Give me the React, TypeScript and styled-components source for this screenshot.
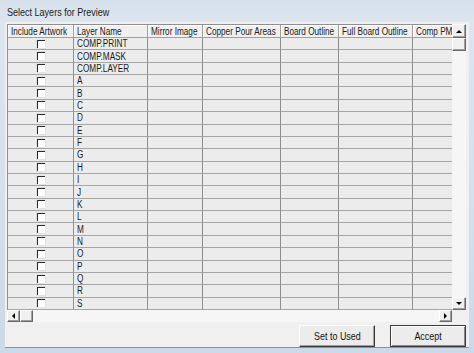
import React from "react";
import styled, { createGlobalStyle } from "styled-components";

const GlobalStyle = createGlobalStyle`
  *, *::before, *::after { box-sizing: border-box; }
  html, body { margin: 0; padding: 0; }
  body {
    background: #d3dfeb;
    font-family: "Liberation Sans", Arial, sans-serif;
  }
`;

// the dialog font is a narrow one; squeeze Liberation Sans to its width
const Label = styled.span<{ $scale?: number; $origin?: string }>`
  display: inline-block;
  white-space: nowrap;
  transform: scaleX(${(p) => p.$scale ?? 0.82});
  transform-origin: ${(p) => p.$origin ?? "left center"};
`;

const Frame = styled.div`
  width: 474px;
  height: 353px;
  display: flex;
  flex-direction: column;
  padding: 0 5px 5px 5px;
  background: linear-gradient(#d6e0ea, #dde6ef 22px, #cbdae9);
  overflow: hidden;
`;

const TitleBar = styled.div`
  height: 22px;
  display: flex;
  align-items: center;
  padding: 1px 0 0 2px;
  font-size: 11px;
  color: #1b1b1b;
`;

const Panel = styled.div`
  flex: 1;
  display: flex;
  flex-direction: column;
  gap: 3px;
  padding: 2px 3px 0 2px;
  background: #f0f0f0;
  border-bottom: 1px solid #8a9098;
`;

const GridBox = styled.div`
  display: grid;
  grid-template-columns: 1fr 14px;
  grid-template-rows: 286px 12px;
  height: 298px;
`;

const Viewport = styled.div`
  overflow: hidden;
  border-top: 1px solid #8f8f8f;
  border-left: 1px solid #8f8f8f;
  background: #ececec;
`;

const Table = styled.div`
  display: grid;
  grid-template-columns: 66px 74px 55px 78px 58px 74px 70px;
  grid-template-rows: 13px repeat(22, 1fr);
  height: 100%;
`;

const HeadCell = styled.div`
  display: flex;
  align-items: center;
  padding-left: 3px;
  font-size: 10px;
  color: #202020;
  white-space: nowrap;
  overflow: hidden;
  background: #f0f0f0;
  border-right: 1px solid #a0a0a0;
  border-bottom: 1px solid #a0a0a0;
  box-shadow: inset 1px 1px #ffffff;
`;

const Cell = styled.div<{ $center?: boolean }>`
  display: flex;
  align-items: center;
  justify-content: ${(p) => (p.$center ? "center" : "flex-start")};
  padding-left: ${(p) => (p.$center ? "0" : "3px")};
  font-size: 10px;
  color: #1a1a1a;
  white-space: nowrap;
  overflow: hidden;
  background: #ececec;
  border-right: 1px solid #8e8e8e;
  border-bottom: 1px solid #a6a6a6;
`;

const CheckBox = styled.div`
  width: 10px;
  height: 10px;
  margin-left: 1px;
  background: #ffffff;
  border: 1px solid;
  border-color: #7a7a7a #ffffff #ffffff #7a7a7a;
  box-shadow: inset 1px 1px #2a2a2a;
  outline: 1px solid #e2e2e2;
  outline-offset: -1px;
`;

const VScroll = styled.div`
  display: flex;
  flex-direction: column;
  background: #f6f6f6;
`;

const HScroll = styled.div`
  display: flex;
  background: #f6f6f6;
`;

const Corner = styled.div`
  background: #f0f0f0;
`;

const ArrowButton = styled.div<{ $w: number; $h: number }>`
  flex: none;
  width: ${(p) => p.$w}px;
  height: ${(p) => p.$h}px;
  display: flex;
  align-items: center;
  justify-content: center;
  background: #f0f0f0;
  border: 1px solid;
  border-color: #ffffff #6a6a6a #6a6a6a #ffffff;
  box-shadow: inset -1px -1px #a0a0a0;
`;

const Track = styled.div`
  flex: 1;
`;

const ButtonRow = styled.div`
  height: 22px;
  display: flex;
  justify-content: flex-end;
  gap: 15px;
`;

const Button = styled.div<{ $default?: boolean }>`
  width: 76px;
  height: 22px;
  display: flex;
  align-items: center;
  justify-content: center;
  font-size: 10.5px;
  color: #111;
  background: #ececec;
  border: 1px solid;
  border-color: ${(p) =>
    p.$default ? "#3a3a3a" : "#ffffff #3c3c3c #3c3c3c #ffffff"};
  box-shadow: ${(p) =>
    p.$default
      ? "inset 1px 1px #ffffff, inset -1px -1px #8a8a8a"
      : "inset -1px -1px #a0a0a0"};
`;

type Dir = "up" | "down" | "left" | "right";

const Arrow = ({ dir }: { dir: Dir }) => {
  const pts: Record<Dir, string> = {
    up: "0,4 6,4 3,1",
    down: "0,1 6,1 3,4",
    left: "4,0 4,6 1,3",
    right: "1,0 1,6 4,3",
  };
  const vertical = dir === "up" || dir === "down";
  return (
    <svg width={vertical ? 6 : 5} height={vertical ? 5 : 6}>
      <polygon points={pts[dir]} fill="#000" />
    </svg>
  );
};

const headers = [
  "Include Artwork",
  "Layer Name",
  "Mirror Image",
  "Copper Pour Areas",
  "Board Outline",
  "Full Board Outline",
  "Comp PMI",
];

const layers = [
  "COMP.PRINT",
  "COMP.MASK",
  "COMP.LAYER",
  ..."ABCDEFGHIJKLMNOPQRS".split(""),
];

const App = () => {
  return (
    <Frame>
      <GlobalStyle />
      <TitleBar>
        <Label $scale={0.82}>Select Layers for Preview</Label>
      </TitleBar>
      <Panel>
        <GridBox>
          <Viewport>
            <Table>
              {headers.map((h) => (
                <HeadCell key={h}>
                  <Label>{h}</Label>
                </HeadCell>
              ))}
              {layers.map((name) => (
                <React.Fragment key={name}>
                  <Cell $center>
                    <CheckBox />
                  </Cell>
                  <Cell>
                    <Label>{name}</Label>
                  </Cell>
                  <Cell />
                  <Cell />
                  <Cell />
                  <Cell />
                  <Cell />
                </React.Fragment>
              ))}
            </Table>
          </Viewport>
          <VScroll>
            <ArrowButton $w={14} $h={14}>
              <Arrow dir="up" />
            </ArrowButton>
            <ArrowButton $w={14} $h={13} />
            <Track />
            <ArrowButton $w={14} $h={13}>
              <Arrow dir="down" />
            </ArrowButton>
          </VScroll>
          <HScroll>
            <ArrowButton $w={13} $h={12}>
              <Arrow dir="left" />
            </ArrowButton>
            <ArrowButton $w={13} $h={12} />
            <Track />
            <ArrowButton $w={13} $h={12}>
              <Arrow dir="right" />
            </ArrowButton>
          </HScroll>
          <Corner />
        </GridBox>
        <ButtonRow>
          <Button>
            <Label $scale={0.85} $origin="center">
              Set to Used
            </Label>
          </Button>
          <Button $default>
            <Label $scale={0.85} $origin="center">
              Accept
            </Label>
          </Button>
        </ButtonRow>
      </Panel>
    </Frame>
  );
};

export default App;
